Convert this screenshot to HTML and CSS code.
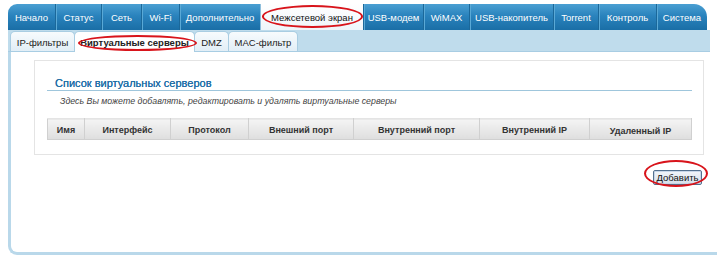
FILE: index.html
```html
<!DOCTYPE html>
<html>
<head>
    <title>Виртуальные серверы</title>
    <link rel="stylesheet" href="styles.css">
</head>
<body>
    <div class="page">
        <ul class="menu">
            <li>Начало</li>
            <li>Статус</li>
            <li>Сеть</li>
            <li>Wi-Fi</li>
            <li>Дополнительно</li>
            <li class="active">Межсетевой экран</li>
            <li>USB-модем</li>
            <li>WiMAX</li>
            <li>USB-накопитель</li>
            <li>Torrent</li>
            <li>Контроль</li>
            <li>Система</li>
        </ul>
        <div class="submenu">
            <a class="subtab">IP-фильтры</a>
            <a class="subtab active">Виртуальные серверы</a>
            <a class="subtab">DMZ</a>
            <a class="subtab">MAC-фильтр</a>
        </div>
        <div class="panel">
            <div class="box">
                <h2 class="box-title">Список виртуальных серверов</h2>
                <p class="hint">Здесь Вы можете добавлять, редактировать и удалять виртуальные серверы</p>
                <table class="grid">
                    <tr>
                        <th class="c-name">Имя</th>
                        <th class="c-iface">Интерфейс</th>
                        <th class="c-proto">Протокол</th>
                        <th class="c-ext">Внешний порт</th>
                        <th class="c-int">Внутренний порт</th>
                        <th class="c-ip">Внутренний IP</th>
                        <th class="c-remote">Удаленный IP</th>
                    </tr>
                </table>
            </div>
            <div class="actions">
                <button class="button">Добавить</button>
            </div>
        </div>

        <!-- red marks drawn over the screenshot -->
        <span class="mark mark-tab"></span>
        <span class="mark mark-subtab"></span>
        <span class="mark mark-button"></span>
    </div>
</body>
</html>
```

FILE: styles.css
```css
body {
    margin: 0;
    background-color: #ffffff;
    font-family: "Liberation Sans", Arial, sans-serif;
    font-size: 11px;
    color: #333333;
    overflow: hidden;
}

.page {
    position: relative;
    padding: 4px 0 0 8px;
}

/* top menu */
.menu {
    display: grid;
    grid-template-columns: 47px 46px 40px 38px 81px 103px 60px 46px 84px 45px 58px 51px;
    width: 699px;
    height: 26px;
    margin: 0;
    padding: 0;
    list-style: none;
    background: linear-gradient(#4a9fd2, #2a83bd 45%, #1a6ea6);
    border-radius: 9px 13px 0 0;
    overflow: hidden;
}

.menu li {
    display: flex;
    align-items: center;
    justify-content: center;
    padding-top: 1px;
    color: #ffffff;
    font-size: 9.5px;
    white-space: nowrap;
    border-left: 1px solid #1b689a;
    box-shadow: inset 1px 0 0 #5aa9d6;
}

.menu li:first-child {
    border-left: none;
    box-shadow: none;
}

.menu li.active {
    background: linear-gradient(#ffffff, #eef5fa);
    color: #111111;
    border-left: 1px solid #8fbfdc;
    box-shadow: none;
}

/* second row */
.submenu {
    display: flex;
    align-items: flex-end;
    width: 702px;
    height: 22px;
    padding-left: 2px;
    box-sizing: border-box;
    background-color: #bfdcec;
    border-bottom: 1px solid #a8cde3;
}

.subtab {
    display: flex;
    align-items: center;
    justify-content: center;
    height: 20px;
    padding-top: 1px;
    box-sizing: border-box;
    font-size: 9.5px;
    color: #222222;
    background: linear-gradient(#f7fbfd, #e2eef6);
    border: 1px solid #a9cde2;
    border-bottom: none;
    border-radius: 5px 5px 0 0;
    margin-right: -1px;
}

.subtab:nth-child(1) { width: 65px; }
.subtab:nth-child(2) { width: 121px; }
.subtab:nth-child(3) { width: 35px; }
.subtab:nth-child(4) { width: 70px; }

.subtab.active {
    background: #ffffff;
    font-weight: bold;
    height: 21px;
    margin-bottom: -1px;
}

/* content panel */
.panel {
    height: 203px;
    box-sizing: border-box;
    border-left: 3px solid #b9d8ea;
    border-bottom: 3px solid #b9d8ea;
    border-bottom-left-radius: 9px;
    padding: 8px 0 0 23px;
}

.box {
    width: 670px;
    box-sizing: border-box;
    border: 1px solid #e4e4e4;
    padding: 0 11px 14px 12px;
}

.box-title {
    margin: 16px 0 0 0;
    padding-left: 8px;
    font-size: 11px;
    font-weight: normal;
    line-height: 13px;
    color: #1f6ea6;
    border-bottom: 1px solid #9fc6dc;
    text-shadow: 0 0 0.5px #1f6ea6;
}

.hint {
    margin: 3px 0 0 0;
    padding-left: 13px;
    font-style: italic;
    font-size: 8.8px;
    line-height: 14px;
    color: #444444;
}

.grid {
    width: 645px;
    margin-top: 10px;
    border-collapse: collapse;
}

.grid th {
    height: 16px;
    padding: 1px 0 0 0;
    font-size: 9px;
    color: #333333;
    background: linear-gradient(#f4f4f4, #dedede);
    border: 1px solid #d0d0d0;
    border-top-color: #e4e4e4;
}

.c-name { width: 36px; }
.c-iface { width: 85px; }
.c-proto { width: 77px; }
.c-ext { width: 104px; }
.c-int { width: 125px; }
.c-ip { width: 109px; }
.grid th.c-remote { padding-top: 4px; }

.actions {
    display: flex;
    justify-content: flex-end;
    width: 668px;
    margin-top: 15px;
}

.button {
    width: 49px;
    height: 15px;
    padding: 0;
    font-family: "Liberation Sans", Arial, sans-serif;
    font-size: 9.5px;
    color: #111111;
    background: linear-gradient(#f2f5fa, #d6dfea);
    border: 1px solid #53708f;
    border-radius: 2px;
    box-shadow: inset 0 0 0 1px #c7d6e8;
}

/* red annotation ellipses */
.mark {
    position: absolute;
    border: 2px solid #d8141b;
    border-radius: 50%;
    box-sizing: border-box;
}

.mark-tab {
    left: 262px;
    top: 5px;
    width: 101px;
    height: 23px;
}

.mark-subtab {
    left: 78px;
    top: 35px;
    width: 119px;
    height: 16px;
}

.mark-button {
    left: 644px;
    top: 160px;
    width: 64px;
    height: 27px;
}
```
